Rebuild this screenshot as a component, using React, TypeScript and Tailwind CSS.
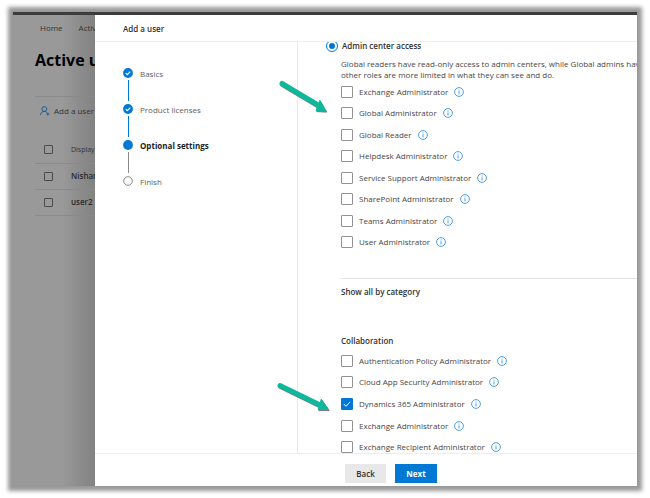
import type { ReactNode } from "react";

const steps = [
  { label: "Basics", state: "done" },
  { label: "Product licenses", state: "done" },
  { label: "Optional settings", state: "current" },
  { label: "Finish", state: "todo" },
];

const commonRoles = [
  "Exchange Administrator",
  "Global Administrator",
  "Global Reader",
  "Helpdesk Administrator",
  "Service Support Administrator",
  "SharePoint Administrator",
  "Teams Administrator",
  "User Administrator",
];

const collaborationRoles = [
  "Authentication Policy Administrator",
  "Cloud App Security Administrator",
  "Dynamics 365 Administrator",
  "Exchange Administrator",
  "Exchange Recipient Administrator",
];

function InfoIcon() {
  return (
    <svg viewBox="0 0 10 10" className="size-[10px] shrink-0" fill="none">
      <circle cx="5" cy="5" r="4.4" stroke="#3a94dc" strokeWidth="0.9" />
      <path d="M5 4.3v3.1M5 2.5v1" stroke="#3a94dc" strokeWidth="0.9" />
    </svg>
  );
}

function Arrow({ shaft, head }: { shaft: string; head: string }) {
  return (
    <svg viewBox="0 0 56 36" className="h-9 w-14" fill="none" strokeLinecap="round" strokeLinejoin="round">
      <g transform="translate(0.6 1.1)" stroke="#4a4a4a" opacity="0.75">
        <path d={shaft} strokeWidth="5" />
        <path d={head} fill="#4a4a4a" strokeWidth="1" />
      </g>
      <g stroke="#0fb89c">
        <path d={shaft} strokeWidth="5" />
        <path d={head} fill="#0fb89c" strokeWidth="1" />
      </g>
    </svg>
  );
}

function RoleList({ name, roles, checked }: { name: string; roles: string[]; checked?: string }) {
  return (
    <ul className={roles.length > 5 ? "grid h-[172px]" : "grid h-[108px]"}>
      {roles.map((role) => (
        <li key={role} className="flex items-center">
          <label className="flex items-center gap-[6px]">
            <span className="relative flex">
              <input
                type="checkbox"
                name={name}
                defaultChecked={role === checked}
                className="peer size-3 appearance-none rounded-[1px] border border-[#929292] bg-white checked:border-[#0078d4] checked:bg-[#0078d4]"
              />
              <svg
                viewBox="0 0 12 12"
                className="pointer-events-none absolute inset-0 hidden peer-checked:block"
                fill="none"
              >
                <path d="m2.8 6 2.2 2.3 4.2-4.5" stroke="white" strokeWidth="1" />
              </svg>
            </span>
            {role}
          </label>
          <button type="button" aria-label={`About ${role}`} className="ml-[6px]">
            <InfoIcon />
          </button>
        </li>
      ))}
    </ul>
  );
}

function Row({ children, small, label }: { children: ReactNode; small?: boolean; label: string }) {
  return (
    <tr className="h-[26px] border-b border-[#8a8a8a]">
      <td className="pl-[9px]">
        <input
          type="checkbox"
          aria-label={label}
          className="mr-[18px] block size-[9px] appearance-none rounded-[1px] border border-[#4a4a4a]"
        />
      </td>
      <td className={small ? "w-full text-[7px] text-[#333]" : "w-full font-semibold text-[#2a2a2a]"}>{children}</td>
    </tr>
  );
}

// The users page, dimmed behind the panel
function UsersPage() {
  return (
    <div className="w-[82px] shrink-0 overflow-hidden bg-linear-to-r from-[#999] from-60% to-[#828282] whitespace-nowrap">
      <div className="pl-[22px]">
        <nav className="mt-[7px] flex h-3 items-center gap-2 pl-[5px] text-[#333]">
          <a href="#home">Home</a>
          <svg viewBox="0 0 4 8" className="h-[7px] w-1" fill="none">
            <path d="m.5.8 3 3.2-3 3.2" stroke="#444" strokeWidth="0.8" />
          </svg>
          <a href="#users">Active</a>
        </nav>
        <h1 className="mt-4 text-base leading-5 font-bold text-black">Active users</h1>
        <div className="mt-[26px] border-t border-[#8a8a8a] pt-2">
          <button type="button" className="flex h-3 items-center gap-1 pl-[5px] text-[#333]">
            <svg viewBox="0 0 10 10" className="size-[10px]" fill="none" stroke="#16568c">
              <circle cx="4.3" cy="3" r="2.4" strokeWidth="0.9" />
              <path d="M.5 9c0-2.2 1.6-3.6 3.8-3.6 1 0 1.9.3 2.5.9M6.3 8h3M7.8 6.5v3" strokeWidth="0.9" />
            </svg>
            Add a user
          </button>
        </div>
        <table className="mt-5 w-full border-collapse text-left">
          <tbody>
            <Row label="Select all" small>
              Display
            </Row>
            <Row label="Select Nishant">Nishant</Row>
            <Row label="Select user2">user2</Row>
          </tbody>
        </table>
      </div>
    </div>
  );
}

function Steps() {
  return (
    <ol className="w-[203px] shrink-0 border-r border-[#e8e8e8] pt-[26px] pl-7">
      {steps.map(({ label, state }, i) => (
        <li key={label} className="flex h-9 gap-[7px]">
          <div className="flex w-[10px] flex-col items-center">
            <svg viewBox="0 0 10 10" className="size-[10px] shrink-0" fill="none">
              {state === "todo" ? (
                <circle cx="5" cy="5" r="4.3" stroke="#8a8886" strokeWidth="1" />
              ) : (
                <circle cx="5" cy="5" r="4.9" fill="#0078d4" />
              )}
              {state === "done" && <path d="m2.7 5.1 1.6 1.5 3-3" stroke="white" strokeWidth="1.2" />}
            </svg>
            {i < steps.length - 1 && (
              <span
                className={
                  state === "done" ? "mt-[2px] h-[21px] w-px bg-[#0078d4]" : "mt-[2px] h-[21px] w-px bg-[#8a8886]"
                }
              />
            )}
          </div>
          <span className={state === "current" ? "leading-3 font-bold text-[#222]" : "leading-3 text-[#605e5c]"}>
            {label}
          </span>
        </li>
      ))}
    </ol>
  );
}

function Settings() {
  return (
    <div className="min-w-0 flex-1 overflow-hidden pl-7 whitespace-nowrap">
      <label className="-mt-[2px] flex items-center gap-1 font-semibold text-[#323130]">
        <input
          type="radio"
          name="access"
          defaultChecked
          className="size-3 appearance-none rounded-full border border-[#0078d4] bg-[#0078d4] bg-clip-content p-[2px]"
        />
        Admin center access
      </label>
      <div className="pl-[15px]">
        <p className="mt-[6px] leading-[11px]">
          Global readers have read-only access to admin centers, while Global admins have
          <br />
          other roles are more limited in what they can see and do.
        </p>
        <div className="mt-px">
          <RoleList name="common" roles={commonRoles} />
        </div>
        <h2 className="mt-[25px] border-t border-[#e3e3e3] pt-[7px] leading-3 font-semibold text-[#323130]">
          Show all by category
        </h2>
        <h3 className="mt-[37px] mb-[3px] leading-3 font-semibold text-[#323130]">Collaboration</h3>
        <RoleList name="collaboration" roles={collaborationRoles} checked="Dynamics 365 Administrator" />
      </div>
    </div>
  );
}

function AddUserPanel() {
  return (
    <section className="flex min-w-0 flex-1 flex-col bg-white">
      <header className="flex h-[27px] shrink-0 items-center border-b border-[#ededed] pt-px pl-7">
        <h2 className="font-semibold text-[#323130]">Add a user</h2>
      </header>
      <div className="flex min-h-0 flex-1 overflow-hidden">
        <Steps />
        <Settings />
      </div>
      <footer className="flex h-[33px] shrink-0 items-start gap-[9px] border-t border-[#ededed] pt-[10px] pl-[250px]">
        <button type="button" className="h-[19px] w-[41px] bg-[#e8e8e8] font-semibold text-[#323130]">
          Back
        </button>
        <button type="button" className="h-[19px] w-[42px] bg-[#0078d4] font-bold text-white">
          Next
        </button>
      </footer>
    </section>
  );
}

function App() {
  return (
    <div className="relative flex h-screen bg-white px-[13px] py-3 font-['Open_Sans','Noto_Sans',sans-serif] text-[8px] text-[#484644]">
      <main className="flex min-w-0 flex-1 border-t-[3px] border-[#3c3c3c] shadow-[0_0_4px_5px_#999]">
        <UsersPage />
        <AddUserPanel />
      </main>
      <div className="pointer-events-none absolute top-[80px] left-[277px]">
        <Arrow shaft="M5 3.5 41 25" head="M43 20.5 49 31 39.5 30.5Z" />
      </div>
      <div className="pointer-events-none absolute top-[381px] left-[275px]">
        <Arrow shaft="M5 4.5 44 23.5" head="M46.5 18.5 53.5 28.5 43.5 28.5Z" />
      </div>
    </div>
  );
}

export default App;
